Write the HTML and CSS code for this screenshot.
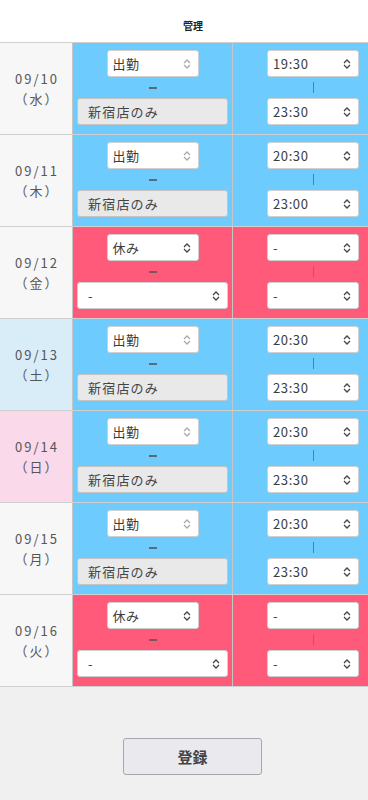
FILE: index.html
```html
<!DOCTYPE html>
<html lang="ja">
<head>
<meta charset="utf-8">
<link rel="stylesheet" href="styles.css">
</head>
<body>
<header class="head"><span>管理</span></header>
<main class="table">
  <div class="row">
    <div class="date">09/10<br>（水）</div>
    <div class="work blue">
      <div class="sel sel-work"><span>出勤</span><svg class="arr light" viewBox="0 0 8 10"><path d="M1 4 L4 1 L7 4 M1 6 L4 9 L7 6"/></svg></div>
      <div class="dash"></div>
      <div class="sel sel-store dis"><span>新宿店のみ</span></div>
    </div>
    <div class="time blue">
      <div class="tw">
        <div class="sel"><span>19:30</span><svg class="arr" viewBox="0 0 8 10"><path d="M1 4 L4 1 L7 4 M1 6 L4 9 L7 6"/></svg></div>
        <div class="vline"></div>
        <div class="sel"><span>23:30</span><svg class="arr" viewBox="0 0 8 10"><path d="M1 4 L4 1 L7 4 M1 6 L4 9 L7 6"/></svg></div>
      </div>
    </div>
  </div>
  <div class="row">
    <div class="date">09/11<br>（木）</div>
    <div class="work blue">
      <div class="sel sel-work"><span>出勤</span><svg class="arr light" viewBox="0 0 8 10"><path d="M1 4 L4 1 L7 4 M1 6 L4 9 L7 6"/></svg></div>
      <div class="dash"></div>
      <div class="sel sel-store dis"><span>新宿店のみ</span></div>
    </div>
    <div class="time blue">
      <div class="tw">
        <div class="sel"><span>20:30</span><svg class="arr" viewBox="0 0 8 10"><path d="M1 4 L4 1 L7 4 M1 6 L4 9 L7 6"/></svg></div>
        <div class="vline"></div>
        <div class="sel"><span>23:00</span><svg class="arr" viewBox="0 0 8 10"><path d="M1 4 L4 1 L7 4 M1 6 L4 9 L7 6"/></svg></div>
      </div>
    </div>
  </div>
  <div class="row">
    <div class="date">09/12<br>（金）</div>
    <div class="work red">
      <div class="sel sel-work"><span>休み</span><svg class="arr" viewBox="0 0 8 10"><path d="M1 4 L4 1 L7 4 M1 6 L4 9 L7 6"/></svg></div>
      <div class="dash"></div>
      <div class="sel sel-store"><span>-</span><svg class="arr" viewBox="0 0 8 10"><path d="M1 4 L4 1 L7 4 M1 6 L4 9 L7 6"/></svg></div>
    </div>
    <div class="time red">
      <div class="tw">
        <div class="sel"><span>-</span><svg class="arr" viewBox="0 0 8 10"><path d="M1 4 L4 1 L7 4 M1 6 L4 9 L7 6"/></svg></div>
        <div class="vline"></div>
        <div class="sel"><span>-</span><svg class="arr" viewBox="0 0 8 10"><path d="M1 4 L4 1 L7 4 M1 6 L4 9 L7 6"/></svg></div>
      </div>
    </div>
  </div>
  <div class="row">
    <div class="date sat">09/13<br>（土）</div>
    <div class="work blue">
      <div class="sel sel-work"><span>出勤</span><svg class="arr light" viewBox="0 0 8 10"><path d="M1 4 L4 1 L7 4 M1 6 L4 9 L7 6"/></svg></div>
      <div class="dash"></div>
      <div class="sel sel-store dis"><span>新宿店のみ</span></div>
    </div>
    <div class="time blue">
      <div class="tw">
        <div class="sel"><span>20:30</span><svg class="arr" viewBox="0 0 8 10"><path d="M1 4 L4 1 L7 4 M1 6 L4 9 L7 6"/></svg></div>
        <div class="vline"></div>
        <div class="sel"><span>23:30</span><svg class="arr" viewBox="0 0 8 10"><path d="M1 4 L4 1 L7 4 M1 6 L4 9 L7 6"/></svg></div>
      </div>
    </div>
  </div>
  <div class="row">
    <div class="date sun">09/14<br>（日）</div>
    <div class="work blue">
      <div class="sel sel-work"><span>出勤</span><svg class="arr light" viewBox="0 0 8 10"><path d="M1 4 L4 1 L7 4 M1 6 L4 9 L7 6"/></svg></div>
      <div class="dash"></div>
      <div class="sel sel-store dis"><span>新宿店のみ</span></div>
    </div>
    <div class="time blue">
      <div class="tw">
        <div class="sel"><span>20:30</span><svg class="arr" viewBox="0 0 8 10"><path d="M1 4 L4 1 L7 4 M1 6 L4 9 L7 6"/></svg></div>
        <div class="vline"></div>
        <div class="sel"><span>23:30</span><svg class="arr" viewBox="0 0 8 10"><path d="M1 4 L4 1 L7 4 M1 6 L4 9 L7 6"/></svg></div>
      </div>
    </div>
  </div>
  <div class="row">
    <div class="date">09/15<br>（月）</div>
    <div class="work blue">
      <div class="sel sel-work"><span>出勤</span><svg class="arr light" viewBox="0 0 8 10"><path d="M1 4 L4 1 L7 4 M1 6 L4 9 L7 6"/></svg></div>
      <div class="dash"></div>
      <div class="sel sel-store dis"><span>新宿店のみ</span></div>
    </div>
    <div class="time blue">
      <div class="tw">
        <div class="sel"><span>20:30</span><svg class="arr" viewBox="0 0 8 10"><path d="M1 4 L4 1 L7 4 M1 6 L4 9 L7 6"/></svg></div>
        <div class="vline"></div>
        <div class="sel"><span>23:30</span><svg class="arr" viewBox="0 0 8 10"><path d="M1 4 L4 1 L7 4 M1 6 L4 9 L7 6"/></svg></div>
      </div>
    </div>
  </div>
  <div class="row">
    <div class="date">09/16<br>（火）</div>
    <div class="work red">
      <div class="sel sel-work"><span>休み</span><svg class="arr" viewBox="0 0 8 10"><path d="M1 4 L4 1 L7 4 M1 6 L4 9 L7 6"/></svg></div>
      <div class="dash"></div>
      <div class="sel sel-store"><span>-</span><svg class="arr" viewBox="0 0 8 10"><path d="M1 4 L4 1 L7 4 M1 6 L4 9 L7 6"/></svg></div>
    </div>
    <div class="time red">
      <div class="tw">
        <div class="sel"><span>-</span><svg class="arr" viewBox="0 0 8 10"><path d="M1 4 L4 1 L7 4 M1 6 L4 9 L7 6"/></svg></div>
        <div class="vline"></div>
        <div class="sel"><span>-</span><svg class="arr" viewBox="0 0 8 10"><path d="M1 4 L4 1 L7 4 M1 6 L4 9 L7 6"/></svg></div>
      </div>
    </div>
  </div>
</main>
<footer class="foot">
  <button class="btn">登録</button>
</footer>
</body>
</html>
```
FILE: styles.css
```css
* { box-sizing: border-box; }
html, body { margin: 0; padding: 0; }
body {
  width: 368px;
  min-height: 800px;
  background: #f0f0f0;
  font-family: "Noto Sans CJK JP", "Noto Sans", sans-serif;
  color: #444;
}
.head {
  height: 42px;
  background: #fff;
  display: flex;
  justify-content: center;
  align-items: flex-start;
  padding-left: 18px;
  padding-top: 17px;
  font-size: 10px;
  font-weight: bold;
  color: #222;
  line-height: 18px;
}
.table {
  border-top: 1px solid #cfcfcf;
}
.row {
  display: grid;
  grid-template-columns: 73px 160px 135px;
  height: 92px;
  border-bottom: 1.5px solid #cfcfcf;
}
.date {
  background: #f7f7f7;
  border-right: 1px solid #c6c6c6;
  display: flex;
  flex-direction: column;
  justify-content: center;
  align-items: center;
  text-align: center;
  font-size: 13px;
  line-height: 20px;
  letter-spacing: 2px;
  padding-left: 2px;
  color: #555;
}
.date.sat { background: #d9edf9; }
.date.sun { background: #fad9eb; }
.blue { background: #6dcbfe; }
.red { background: #ff5a79; }
.work {
  border-right: 1px solid #c6c6c6;
  display: flex;
  flex-direction: column;
  align-items: center;
  padding: 7px 4px 0 4px;
}
.sel {
  height: 27px;
  background: #fff;
  border: 1px solid #d0d0d0;
  border-radius: 3px;
  display: flex;
  align-items: center;
  justify-content: space-between;
  padding: 0 7px 0 5px;
  font-size: 13px;
  letter-spacing: 0.6px;
  color: #3c3c3c;
  width: 92px;
}
.sel-work span { letter-spacing: 0.5px; }
.sel-store {
  width: 151px;
  padding-left: 10px;
}
.sel-store span { letter-spacing: 1.2px; }
.sel.dis {
  background: #e9e9e9;
  border-color: #c4c4c4;
  color: #444;
}
.arr {
  width: 8px;
  height: 10px;
  flex: none;
  fill: none;
  stroke: #444;
  stroke-width: 1.3;
}
.arr.light { stroke: #aaa; }
.dash {
  width: 8px;
  height: 2px;
  background: #5a6a75;
  margin: 10px 0 9px;
}
.red .dash { background: #7a5560; }
.time {
  display: flex;
  justify-content: flex-end;
  padding: 7px 9px 0 0;
}
.tw {
  width: 92px;
  display: flex;
  flex-direction: column;
  align-items: center;
}
.vline {
  width: 1px;
  height: 11px;
  background: #777;
  margin: 5px 0 5px;
}
.foot {
  display: flex;
  justify-content: center;
  padding: 51px 0 0 17px;
}
.btn {
  width: 139px;
  height: 37px;
  background: #e9e9ee;
  border: 1px solid #a6a6ae;
  border-radius: 3px;
  font-family: "Noto Sans CJK JP", sans-serif;
  font-size: 15px;
  font-weight: bold;
  color: #444;
  padding: 0;
}
```
